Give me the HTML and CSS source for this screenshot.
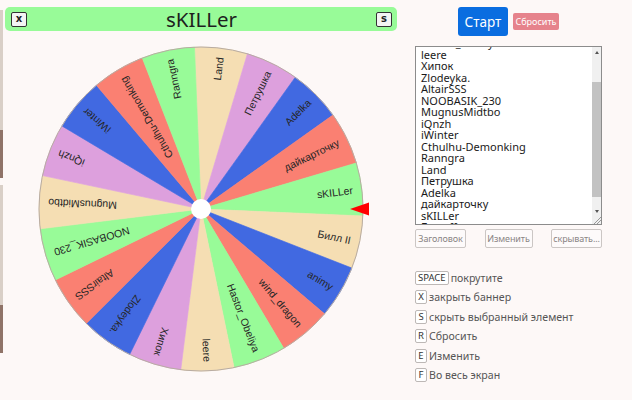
FILE: index.html
```html
<!DOCTYPE html>
<html lang="ru">
<head>
    <meta charset="UTF-8">
    <meta name="viewport" content="width=device-width, initial-scale=1.0">
    <title>Колесо имён</title>
    <link rel="stylesheet" href="styles.css">
</head>
<body>
    <div class="strip">
        <span class="shot light"></span>
        <span class="shot dark"></span>
        <span class="shot gap"></span>
        <span class="shot light"></span>
        <span class="shot dark"></span>
    </div>

    <div class="stage">
        <div class="banner">
            <kbd class="banner-key">x</kbd>
            <span class="banner-title">sKILLer</span>
            <kbd class="banner-key">s</kbd>
        </div>

        <svg class="wheel" viewBox="-170 -170 340 340" width="340" height="340">
            <defs>
                <!-- one slice of 360/19 degrees, rotated into place below -->
                <path id="slice" d="M0 0L162 0A162 162 0 0 1 153.22 52.6Z"/>
            </defs>
            <g>
                <use href="#slice" class="wheat" transform="rotate(-92.3)"/>
                <use href="#slice" class="plum" transform="rotate(-73.35)"/>
                <use href="#slice" class="blue" transform="rotate(-54.41)"/>
                <use href="#slice" class="salmon" transform="rotate(-35.46)"/>
                <use href="#slice" class="green" transform="rotate(-16.51)"/>
                <use href="#slice" class="wheat" transform="rotate(2.44)"/>
                <use href="#slice" class="blue" transform="rotate(21.38)"/>
                <use href="#slice" class="salmon" transform="rotate(40.33)"/>
                <use href="#slice" class="green" transform="rotate(59.28)"/>
                <use href="#slice" class="wheat" transform="rotate(78.22)"/>
                <use href="#slice" class="plum" transform="rotate(97.17)"/>
                <use href="#slice" class="blue" transform="rotate(116.12)"/>
                <use href="#slice" class="salmon" transform="rotate(135.06)"/>
                <use href="#slice" class="green" transform="rotate(154.01)"/>
                <use href="#slice" class="wheat" transform="rotate(172.96)"/>
                <use href="#slice" class="plum" transform="rotate(191.91)"/>
                <use href="#slice" class="blue" transform="rotate(210.85)"/>
                <use href="#slice" class="salmon" transform="rotate(229.8)"/>
                <use href="#slice" class="green" transform="rotate(248.75)"/>
            </g>
            <circle class="rim" r="162"/>
            <g class="labels">
                <text transform="rotate(-82.83)" x="153" dy="0.35em">Land</text>
                <text transform="rotate(-63.88)" x="153" dy="0.35em">Петрушка</text>
                <text transform="rotate(-44.93)" x="153" dy="0.35em">Adelka</text>
                <text transform="rotate(-25.99)" x="153" dy="0.35em">дайкарточку</text>
                <text transform="rotate(-7.04)" x="153" dy="0.35em">sKILLer</text>
                <text transform="rotate(11.91)" x="153" dy="0.35em">Билл II</text>
                <text transform="rotate(30.85)" x="153" dy="0.35em">animy</text>
                <text transform="rotate(49.8)" x="153" dy="0.35em">wind_dragon</text>
                <text transform="rotate(68.75)" x="153" dy="0.35em">Hastor_Obeliya</text>
                <text transform="rotate(87.7)" x="153" dy="0.35em">leere</text>
                <text transform="rotate(106.64)" x="153" dy="0.35em">Хипок</text>
                <text transform="rotate(125.59)" x="153" dy="0.35em">Zlodeyka.</text>
                <text transform="rotate(144.54)" x="153" dy="0.35em">AltairSSS</text>
                <text transform="rotate(163.48)" x="153" dy="0.35em">NOOBASIK_230</text>
                <text transform="rotate(182.43)" x="153" dy="0.35em">MugnusMidtbo</text>
                <text transform="rotate(201.38)" x="153" dy="0.35em">iQnzh</text>
                <text transform="rotate(220.32)" x="153" dy="0.35em">iWinter</text>
                <text transform="rotate(239.27)" x="153" dy="0.35em">Cthulhu-Demonking</text>
                <text transform="rotate(258.22)" x="153" dy="0.35em">Ranngra</text>
            </g>
            <circle class="hub" r="10"/>
            <polygon class="pointer" points="149,0 168,-6.4 168,6.4"/>
        </svg>
    </div>

    <div class="panel">
        <div class="actions">
            <button class="btn-start">Старт</button>
            <button class="btn-reset">Сбросить</button>
        </div>

        <div class="names">
            <div class="names-lines">
                <div>Hastor_Obeliya</div>
                <div>leere</div>
                <div>Хипок</div>
                <div>Zlodeyka.</div>
                <div>AltairSSS</div>
                <div>NOOBASIK_230</div>
                <div>MugnusMidtbo</div>
                <div>iQnzh</div>
                <div>iWinter</div>
                <div>Cthulhu-Demonking</div>
                <div>Ranngra</div>
                <div>Land</div>
                <div>Петрушка</div>
                <div>Adelka</div>
                <div>дайкарточку</div>
                <div>sKILLer</div>
                <div>Билл II</div>
            </div>
            <div class="scrollbar">
                <span class="sb-arrow up"></span>
                <span class="sb-track top"></span>
                <span class="sb-thumb"></span>
                <span class="sb-track"></span>
                <span class="sb-arrow down"></span>
                <span class="sb-grip"></span>
            </div>
        </div>

        <div class="tools">
            <button class="btn-tool title">Заголовок</button>
            <button class="btn-tool edit">Изменить</button>
            <button class="btn-tool hide">скрывать...</button>
        </div>

        <ul class="hotkeys">
            <li><kbd>SPACE</kbd> покрутите</li>
            <li><kbd>X</kbd> закрыть баннер</li>
            <li><kbd>S</kbd> скрыть выбранный элемент</li>
            <li><kbd>R</kbd> Сбросить</li>
            <li><kbd>E</kbd> Изменить</li>
            <li><kbd>F</kbd> Во весь экран</li>
        </ul>
    </div>
</body>
</html>
```

FILE: styles.css
```css
body {
    margin: 0;
    display: flex;
    background-color: #fdf8f7;
    font-family: "Noto Sans", "Open Sans", sans-serif;
    color: #222;
}
.strip {
    width: 3px;
    padding-top: 10px;
    display: flex;
    flex-direction: column;
}
.shot {
    display: block;
}
.shot.light {
    height: 120px;
    background-color: #d9cfc7;
}
.shot.dark {
    height: 48px;
    background-color: #8f7368;
}
.shot.gap {
    height: 7px;
}
.stage {
    width: 392px;
    margin-left: 2px;
    padding-top: 7px;
}
.banner {
    height: 24px;
    padding: 0 5px 0 6px;
    display: flex;
    align-items: center;
    justify-content: space-between;
    background-color: #98fb98;
    border-radius: 5px;
}
.banner-key {
    width: 14px;
    height: 13px;
    border: 1px solid #333;
    border-radius: 2px;
    background-color: #f4f4f4;
    font-family: "DejaVu Sans", sans-serif;
    font-size: 10px;
    font-weight: bold;
    line-height: 12px;
    text-align: center;
}
.banner-title {
    font-size: 20.5px;
    line-height: 24px;
    color: #1e1e1e;
}
.wheel {
    display: block;
    margin: 8px auto 0;
}
.wheat { fill: #f5deb3; stroke: #f5deb3; }
.plum { fill: #dda0dd; stroke: #dda0dd; }
.blue { fill: #4169e1; stroke: #4169e1; }
.salmon { fill: #fa8072; stroke: #fa8072; }
.green { fill: #98fb98; stroke: #98fb98; }
.wheel use {
    stroke-width: 0.6;
}
.rim {
    fill: none;
    stroke: #b8aca2;
    stroke-width: 1;
}
.labels {
    font-family: "Liberation Sans", Arial, sans-serif;
    font-size: 10.5px;
    fill: #262626;
    text-anchor: end;
}
.hub {
    fill: #fff;
}
.pointer {
    fill: #ff0000;
}
.panel {
    width: 187px;
    margin-left: 18px;
    padding-top: 7px;
}
.actions {
    display: flex;
    justify-content: center;
    align-items: center;
    gap: 5px;
}
button {
    font-family: inherit;
    padding: 0;
    cursor: pointer;
}
.btn-start {
    width: 50px;
    height: 29px;
    border: none;
    border-radius: 3px;
    background-color: #0a6de0;
    color: #fff;
    font-size: 13.5px;
}
.btn-reset {
    width: 46px;
    height: 17px;
    border: none;
    border-radius: 2px;
    background-color: #e6838c;
    color: #fff;
    font-size: 9px;
}
.names {
    height: 177px;
    margin-top: 10px;
    border: 1px solid #8c8c8c;
    background-color: #fff;
    display: flex;
    overflow: hidden;
}
.names-lines {
    flex: 1;
    padding-left: 5px;
    margin-top: -10px;
    font-size: 11px;
    line-height: 11.5px;
    color: #1a1a1a;
}
.scrollbar {
    width: 9px;
    display: flex;
    flex-direction: column;
    background-color: #f0f0f0;
}
.sb-arrow {
    height: 10px;
    display: flex;
    align-items: center;
    justify-content: center;
}
.sb-arrow::before {
    content: "";
    border-left: 2.5px solid transparent;
    border-right: 2.5px solid transparent;
}
.sb-arrow.up::before {
    border-bottom: 3px solid #555;
}
.sb-arrow.down::before {
    border-top: 3px solid #555;
}
.sb-track {
    height: 9px;
}
.sb-track.top {
    height: 25px;
}
.sb-thumb {
    height: 115px;
    background-color: #c2c2c2;
}
.sb-grip {
    height: 8px;
    background:
        linear-gradient(135deg, transparent 55%, #999 55%, #999 62%, transparent 62%, transparent 75%, #999 75%, #999 82%, transparent 82%);
}
.tools {
    margin-top: 4px;
    display: flex;
    justify-content: space-between;
}
.btn-tool {
    height: 19px;
    border: 1px solid #cbc6c4;
    border-radius: 2px;
    background-color: #fdfafa;
    color: #8a8584;
    font-size: 9px;
    letter-spacing: -0.1px;
}
.btn-tool.title {
    width: 51px;
}
.btn-tool.edit {
    width: 48px;
}
.btn-tool.hide {
    width: 51px;
}
.hotkeys {
    list-style: none;
    margin: 23px 0 0;
    padding: 0;
    font-size: 10.6px;
    color: #555;
}
.hotkeys li {
    height: 14px;
    margin-bottom: 5.4px;
    display: flex;
    align-items: center;
    gap: 2px;
}
.hotkeys kbd {
    height: 12px;
    padding: 0 2px;
    min-width: 6px;
    border: 1px solid #bdb8b6;
    border-radius: 2px;
    font-family: inherit;
    font-size: 9.5px;
    line-height: 12px;
    color: #333;
    text-align: center;
    background-color: #fff;
}
```
